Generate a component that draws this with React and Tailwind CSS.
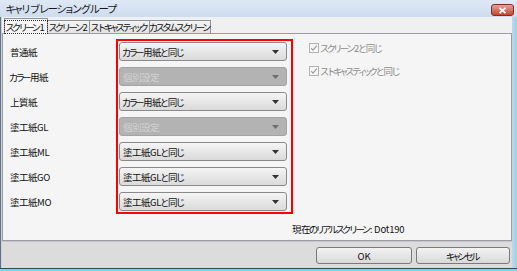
import React from 'react';

const font = "[font-family:'Noto_Sans_CJK_JP','Noto_Sans',sans-serif]";
const small = 'text-[9.5px] leading-[12px] whitespace-nowrap';

// the dialog font is proportional: kana sit narrower than kanji, small kana narrower still.
// half of the squeeze is moved to the left so glyphs stay centred in their cells
const bodySpacing = {
    smallKana: 'tracking-[-4.3px] ml-[-2px] mr-[2px]',
    kana: 'tracking-[-2.8px] ml-[-1.3px] mr-[1.3px]',
    kanji: 'tracking-[-0.5px]',
    latin: 'tracking-[-0.2px]',
};
const titleSpacing = {
    smallKana: 'tracking-[-3.9px] ml-[-1.8px] mr-[1.8px]',
    kana: 'tracking-[-1.6px] ml-[-0.7px] mr-[0.7px]',
    kanji: 'tracking-[-0.5px]',
    latin: 'tracking-[0px]',
};

function kind(ch) {
    if (/[ァィゥェォャュョッヮぁぃぅぇぉゃゅょっ]/.test(ch)) return 'smallKana';
    if (/[\u3040-\u30ff]/.test(ch)) return 'kana';
    if (/[\u4e00-\u9fff]/.test(ch)) return 'kanji';
    return 'latin';
}

function T({ children, spacing = bodySpacing }) {
    const runs = [];
    for (const ch of String(children)) {
        const k = kind(ch);
        const last = runs[runs.length - 1];
        if (last && last.k === k) last.text += ch;
        else runs.push({ k, text: ch });
    }
    return runs.map((r, i) => (
        <span key={i} className={spacing[r.k]}>{r.text}</span>
    ));
}

const rows = [
    { label: '普通紙', value: 'カラー用紙と同じ' },
    { label: 'カラー用紙', value: '個別設定', disabled: true },
    { label: '上質紙', value: 'カラー用紙と同じ' },
    { label: '塗工紙GL', value: '個別設定', disabled: true },
    { label: '塗工紙ML', value: '塗工紙GLと同じ' },
    { label: '塗工紙GO', value: '塗工紙GLと同じ' },
    { label: '塗工紙MO', value: '塗工紙GLと同じ' },
];

const tabs = [
    { label: 'スクリーン1', width: 'w-[44px]', active: true },
    { label: 'スクリーン2', width: 'w-[43px]' },
    { label: 'ストキャスティック', width: 'w-[61px]' },
    { label: 'カスタムスクリーン', width: 'w-[62px]' },
];

function Arrow({ color }) {
    return (
        <svg width="7" height="4" viewBox="0 0 7 4" className="shrink-0">
            <path d="M0 0h7L3.5 4z" fill={color} />
        </svg>
    );
}

function Dropdown({ value, disabled }) {
    const base = `h-[19px] w-[168px] flex items-center pl-[3px] pr-[7px] rounded-[3px] border ${small}`;
    const styles = disabled
        ? `${base} border-[#a3a3a3] bg-[#b3b3b3] text-[#d2d2d2]`
        : `${base} border-[#8a8a8a] bg-gradient-to-b from-[#f5f5f5] to-[#dadada] text-[#111]`;

    return (
        <div className={styles}>
            <span className="flex-1"><T>{value}</T></span>
            <Arrow color={disabled ? '#6e6e6e' : '#333'} />
        </div>
    );
}

function Check({ label }) {
    return (
        <div className="h-[14px] flex items-center gap-[2px]">
            <div className="w-[10px] h-[10px] border border-[#b2b2b2] bg-[#f6f6f6] flex items-center justify-center">
                <svg width="8" height="8" viewBox="0 0 8 8">
                    <path d="M1.2 4.2l1.8 1.9 3.8-4.4" fill="none" stroke="#9a9a9a" strokeWidth="1.1" />
                </svg>
            </div>
            <span className={`${small} text-[#8c8c8c]`}><T>{label}</T></span>
        </div>
    );
}

function Button({ children, className = '' }) {
    return (
        <button
            type="button"
            className={`h-[17px] rounded-[3px] border border-[#7a7a7a] bg-gradient-to-b from-[#f3f3f3] to-[#d9d9d9] text-[#111] ${small} ${className}`}
        >
            <T>{children}</T>
        </button>
    );
}

export default function App() {
    return (
        <div className={`w-[517px] h-[271px] flex flex-col overflow-hidden bg-[#cfdef0] ${font}`}>
            <div className="h-[17px] flex items-center pl-[6px] pr-[3px] bg-gradient-to-b from-[#dfe9f5] to-[#cddcee]">
                <span className="text-[10.5px] leading-[14px] whitespace-nowrap text-[#1a1a1a]">
                    <T spacing={titleSpacing}>キャリブレーショングループ</T>
                </span>
                <div className="ml-auto mt-[3px] w-[23px] h-[12px] rounded-[3px] border border-[#7c2f25] bg-gradient-to-b from-[#e3a397] to-[#c4412f] flex items-center justify-center">
                    <svg width="9" height="7" viewBox="0 0 9 7">
                        <path d="M1.5 0.8l6 5.4M7.5 0.8l-6 5.4" stroke="#fff" strokeWidth="1.8" />
                    </svg>
                </div>
            </div>

            <div className="flex-1 flex min-h-0">
                <div className="w-[2px] border-l border-[#66737f] bg-[#c4d3e4]" />

                <div className="w-[510px] flex flex-col bg-[#f0f0f0]">
                    <div className="h-[16px] flex items-end pl-[2px]">
                        {tabs.map((tab) =>
                            tab.active ? (
                                <div
                                    key={tab.label}
                                    className={`${tab.width} h-[16px] -mb-px relative z-10 flex items-center justify-center border border-b-0 border-[#8e9199] bg-[#f5f5f5]`}
                                >
                                    <span className={`pl-[1px] pr-[2px] h-[12px] flex items-center outline outline-1 outline-dotted outline-[#333] text-[#111] ${small}`}>
                                        <T>{tab.label}</T>
                                    </span>
                                </div>
                            ) : (
                                <div
                                    key={tab.label}
                                    className={`${tab.width} h-[13px] -ml-px flex items-center justify-center border border-b-0 border-[#8e9199] bg-gradient-to-b from-[#f3f3f3] to-[#e3e3e3] text-[#111] ${small}`}
                                >
                                    <T>{tab.label}</T>
                                </div>
                            )
                        )}
                    </div>

                    <div className="h-[208px] border border-[#9a9da4] bg-[#f5f5f5] pt-[5px] pl-[7px] flex flex-col">
                        <div className="flex">
                            <div className="w-[106px] flex flex-col gap-[6px] pt-[3px]">
                                {rows.map((row) => (
                                    <div key={row.label} className={`h-[19px] flex items-center text-[#111] ${small}`}>
                                        <T>{row.label}</T>
                                    </div>
                                ))}
                            </div>

                            <div className="border-2 border-[#f00] pt-[1px] pb-[1px] pl-[1px] pr-[4px] flex flex-col gap-[6px]">
                                {rows.map((row) => (
                                    <Dropdown key={row.label} value={row.value} disabled={row.disabled} />
                                ))}
                            </div>

                            <div className="ml-[16px] pt-[2px] flex flex-col gap-[9px]">
                                <Check label="スクリーン2と同じ" />
                                <Check label="ストキャスティックと同じ" />
                            </div>
                        </div>

                        <div className={`mt-[8px] ml-[282px] h-[14px] flex items-center text-[#111] ${small}`}>
                            <T>現在のリアルスクリーン: Dot190</T>
                        </div>
                    </div>

                    <div className="flex-1 border-t border-[#c6c6c6] bg-[#dcdcdc] flex justify-end items-start gap-[4px] pt-[5px] pr-[2px]">
                        <Button className="w-[96px]">OK</Button>
                        <Button className="w-[94px]">キャンセル</Button>
                    </div>
                </div>

                <div className="w-[5px] bg-gradient-to-r from-[#c7d7ea] to-[#8fd3ea]" />
            </div>

            <div className="h-[3px] border-t border-[#2c4f5c] bg-[#7fd4ea]" />
        </div>
    );
}
